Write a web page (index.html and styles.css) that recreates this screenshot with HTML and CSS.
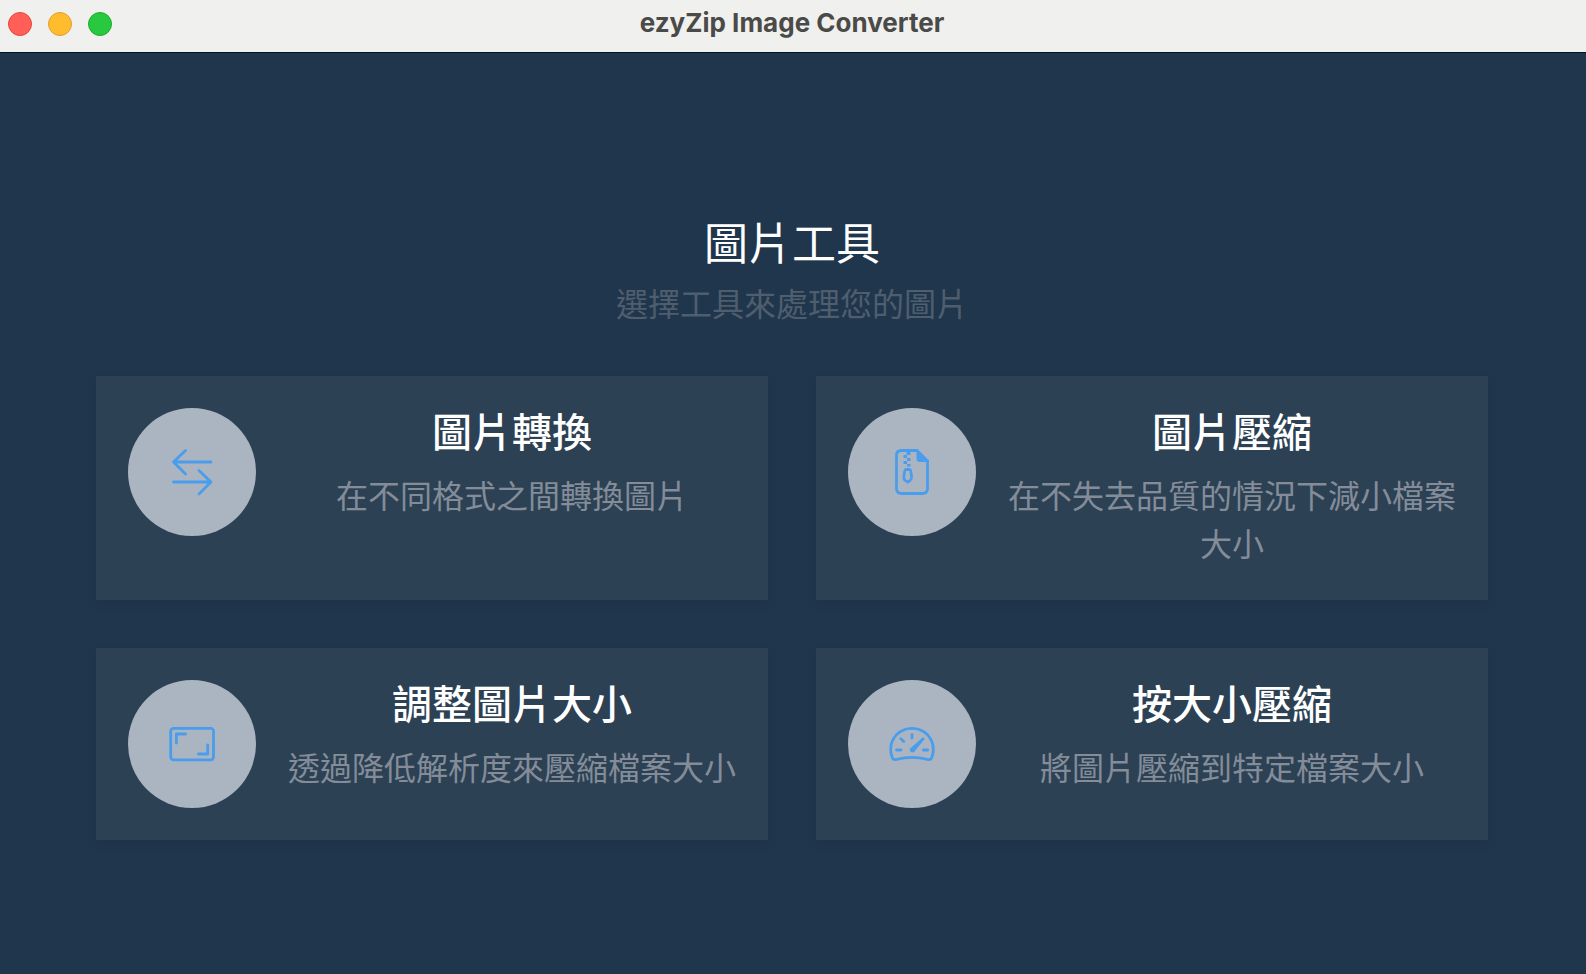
FILE: index.html
```html
<!DOCTYPE html>
<html lang="zh-Hant">
<head>
	<meta charset="UTF-8">
	<meta name="viewport" content="width=device-width, initial-scale=1">
	<title>ezyZip Image Converter</title>
	<link rel="stylesheet" href="styles.css">
</head>
<body>
	<header class="titlebar">
		<div class="lights">
			<button class="light close" type="button" aria-label="Close"></button>
			<button class="light minimize" type="button" aria-label="Minimize"></button>
			<button class="light maximize" type="button" aria-label="Maximize"></button>
		</div>
		<div class="app-title">ezyZip Image Converter</div>
	</header>
	<main class="content">
		<h1>圖片工具</h1>
		<p class="subtitle">選擇工具來處理您的圖片</p>
		<div class="tools">
			<a class="card" href="#convert">
				<span class="circle">
					<svg class="icon" viewBox="0 0 48 48">
						<path d="M43 14H5.5M17.5 2.5L5.5 14L17.5 26M5.5 34H43M31 22.5L43 34L31 46"/>
					</svg>
				</span>
				<div class="text">
					<h2>圖片轉換</h2>
					<p>在不同格式之間轉換圖片</p>
				</div>
			</a>
			<a class="card" href="#compress">
				<span class="circle">
					<svg class="icon" viewBox="0 0 48 48">
						<path d="M29 2.5H13.5Q8.5 2.5 8.5 7.5V40.5Q8.5 45.5 13.5 45.5H34.5Q39.5 45.5 39.5 40.5V13"/>
						<path class="solid" d="M28.5 1H29.5L41 12.5V14H32Q28.5 14 28.5 10.5Z"/>
						<path class="solid" d="M18.5 2H22.5V7H18.5ZM15.5 7H19V10H15.5ZM19 10H22.5V13H19ZM15.5 13H19V16H15.5ZM19 16H22.5V18.5H19Z"/>
						<path d="M18 21.5H21.5Q22.5 21.5 22.7 23L23.6 29Q23.8 31.2 22 32.6L19.8 34L17.5 32.6Q15.5 31.2 15.8 29L16.7 23Q17 21.5 18 21.5Z"/>
					</svg>
				</span>
				<div class="text">
					<h2>圖片壓縮</h2>
					<p>在不失去品質的情況下減小檔案大小</p>
				</div>
			</a>
			<a class="card" href="#resize">
				<span class="circle">
					<svg class="icon" viewBox="0 0 48 48">
						<rect x="2.7" y="8.4" width="42.8" height="31.4" rx="2.8"/>
						<path d="M8.4 23V14H17.6M30.4 34H39.7V25"/>
					</svg>
				</span>
				<div class="text">
					<h2>調整圖片大小</h2>
					<p>透過降低解析度來壓縮檔案大小</p>
				</div>
			</a>
			<a class="card" href="#compress-to-size">
				<span class="circle">
					<svg class="icon" viewBox="0 0 48 48">
						<path d="M24 8.4C11.5 8.4 2.7 18 2.7 29.5C2.7 32.5 3.2 35 4.2 37.5C5 39.5 6.5 39.9 8.5 39.4C14 38 18.5 37.3 24 37.3S34 38 39.5 39.4C41.5 39.9 43 39.5 43.8 37.5C44.8 35 45.3 32.5 45.3 29.5C45.3 18 36.5 8.4 24 8.4Z"/>
						<path d="M24 14.6V18M12.8 18.8L15.8 21.6M8.5 30H13M35.4 30H39.7"/>
						<path class="solid" d="M34.6 17.6Q36.6 17 36.4 19.2L26.6 31.6Q24.4 33.4 22.4 31.6Q21 30 22.4 28.2Z"/>
					</svg>
				</span>
				<div class="text">
					<h2>按大小壓縮</h2>
					<p>將圖片壓縮到特定檔案大小</p>
				</div>
			</a>
		</div>
	</main>
</body>
</html>
```

FILE: styles.css
```css
* {
	margin: 0;
	padding: 0;
	box-sizing: border-box;
}
body {
	min-height: 100vh;
	background-color: #20364d;
	color: #fff;
	font-family: Inter, "Noto Sans CJK TC", sans-serif;
}
.titlebar {
	display: grid;
	grid-template-columns: 1fr auto 1fr;
	align-items: center;
	height: 53px;
	padding: 0 10px 4px 8px;
	background-color: #f0f0ee;
	border-bottom: 1px solid #04152a;
}
.lights {
	display: flex;
	gap: 16px;
}
.light {
	width: 24px;
	height: 24px;
	border: 1px solid;
	border-radius: 50%;
}
.close {
	background-color: #ff5f57;
	border-color: #e2463f;
}
.minimize {
	background-color: #febc2e;
	border-color: #e0a028;
}
.maximize {
	background-color: #28c840;
	border-color: #1dac2c;
}
.app-title {
	padding-bottom: 3px;
	color: #4a4a48;
	font-size: 26px;
	font-weight: bold;
}
.content {
	padding: 160px 98px 48px 96px;
	font-family: "Noto Sans CJK TC", sans-serif;
	text-align: center;
}
h1 {
	margin-bottom: 9px;
	font-size: 44px;
	font-weight: 400;
	line-height: 56px;
}
.subtitle {
	margin-bottom: 50px;
	color: #4f5e6e;
	font-size: 32px;
	line-height: 48px;
}
.tools {
	display: grid;
	grid-template-columns: 1fr 1fr;
	gap: 48px;
}
.card {
	display: flex;
	gap: 32px;
	padding: 32px;
	background-color: #2c4154;
	box-shadow: 0 4px 12px rgba(0, 0, 0, 0.06);
	color: #fff;
	text-decoration: none;
}
.circle {
	display: flex;
	flex-shrink: 0;
	align-items: center;
	justify-content: center;
	width: 128px;
	height: 128px;
	border-radius: 50%;
	background-color: #abb5c1;
}
.icon {
	width: 48px;
	height: 48px;
	fill: none;
	stroke: #4a9ded;
	stroke-width: 2.8;
	stroke-linecap: round;
	stroke-linejoin: round;
}
.icon .solid {
	fill: #4a9ded;
	stroke: none;
}
.text {
	flex: 1;
	padding-bottom: 2px;
}
.text h2 {
	margin-bottom: 18px;
	font-size: 40px;
	font-weight: 500;
	line-height: 44px;
}
.text p {
	color: #838c98;
	font-size: 32px;
	line-height: 48px;
}
```
